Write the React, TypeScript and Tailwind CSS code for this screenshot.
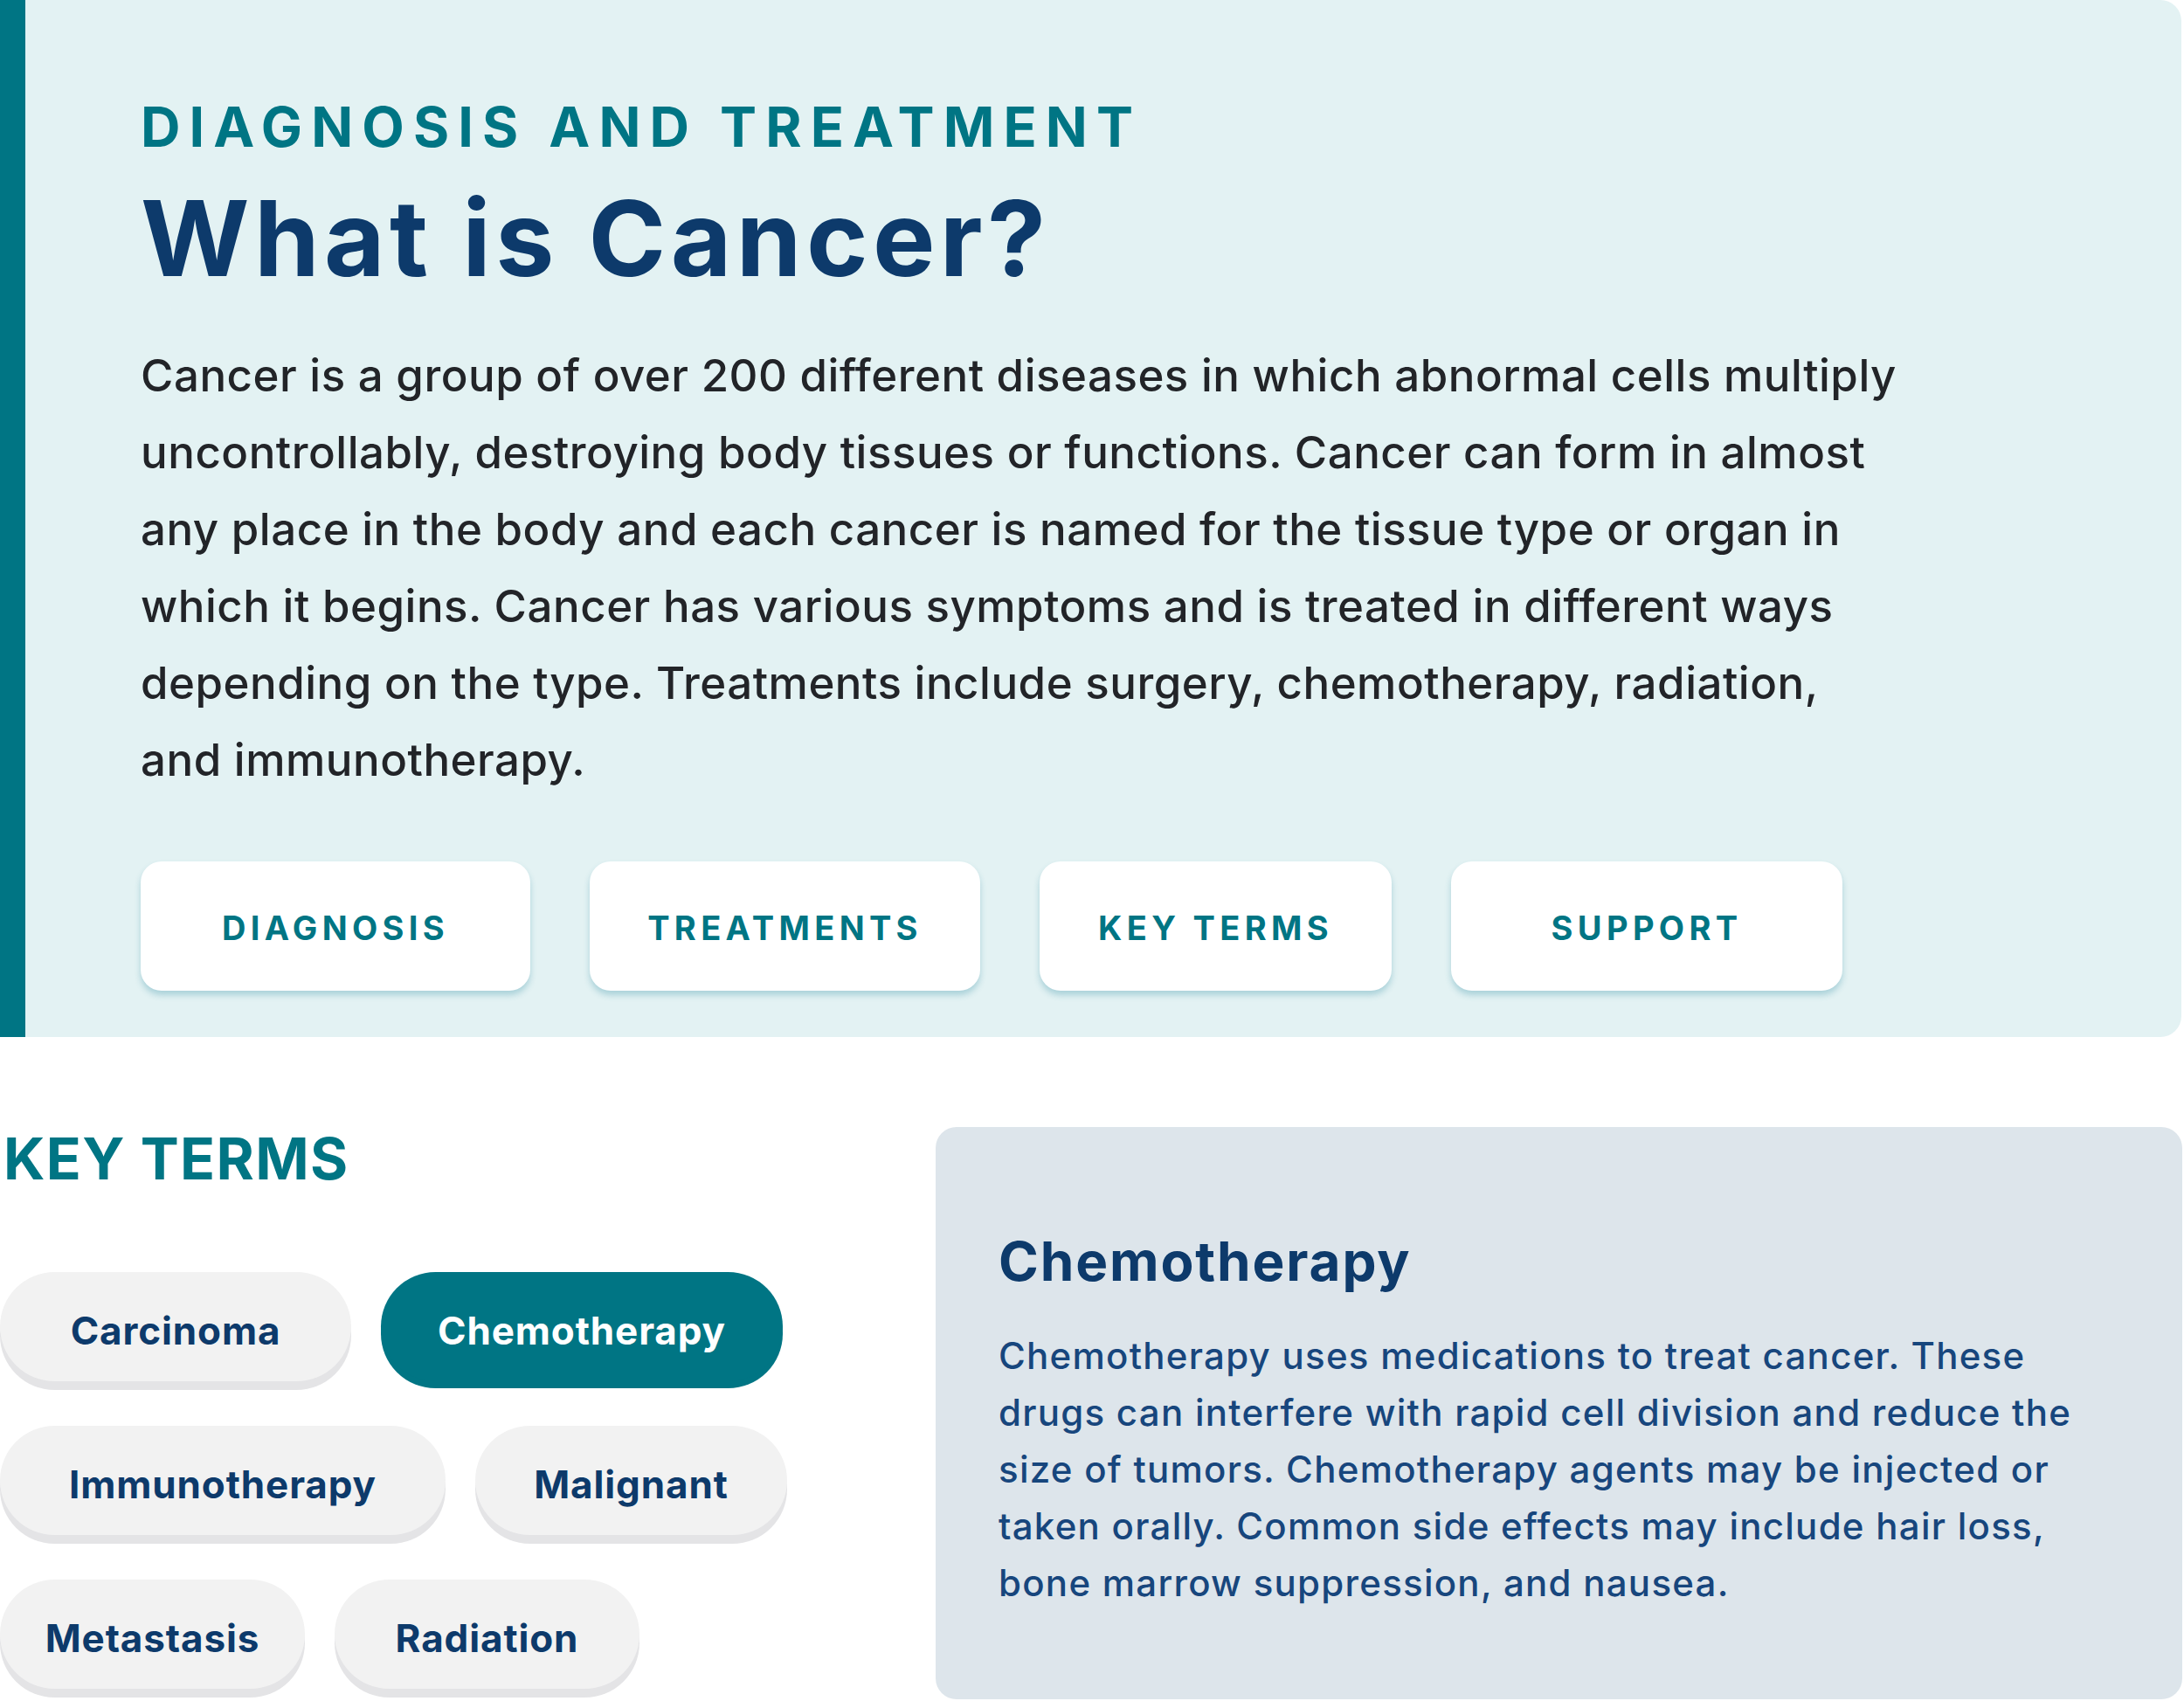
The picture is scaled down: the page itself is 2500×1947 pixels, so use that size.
const sections = [
  { label: "DIAGNOSIS", w: "w-[446px]" },
  { label: "TREATMENTS", w: "w-[447px]" },
  { label: "KEY TERMS", w: "w-[403px]" },
  { label: "SUPPORT", w: "w-[448px]" },
];

const terms = [
  { label: "Carcinoma", w: "w-[402px]" },
  { label: "Chemotherapy", w: "w-[460px]", active: true },
  { label: "Immunotherapy", w: "w-[510px]" },
  { label: "Malignant", w: "w-[357px]" },
  { label: "Metastasis", w: "w-[349px]" },
  { label: "Radiation", w: "w-[349px]" },
];

function TermChip({ label, w, active }: { label: string; w: string; active?: boolean }) {
  return (
    <button
      className={
        active
          ? `${w} h-[125px] pt-[8px] rounded-full bg-[#007584] text-white text-[44px] font-bold leading-none tracking-[0.02em] shadow-[0_8px_0_#007584]`
          : `${w} h-[125px] pt-[8px] rounded-full bg-[#f2f2f2] text-[#0d3a6b] text-[44px] font-bold leading-none tracking-[0.02em] shadow-[0_10px_0_#e4e4e6]`
      }
    >
      {label}
    </button>
  );
}

export default function App() {
  return (
    <div className="w-[2500px] h-[1947px] bg-white font-['Inter',sans-serif] overflow-hidden">
      {/* intro panel */}
      <section className="mr-[3px] h-[1187px] flex border-l-[29px] border-[#007584] bg-[#e3f2f3] rounded-r-[24px]">
        <div className="pl-[132px] pt-[114px] flex flex-col">
          <p className="text-[63px] leading-none font-bold tracking-[0.16em] text-[#007584]">
            DIAGNOSIS AND TREATMENT
          </p>
          <h1 className="mt-[36px] text-[120px] leading-none font-bold tracking-[0.045em] text-[#0d3a6b]">
            What is Cancer?
          </h1>
          <p className="mt-[53px] max-w-[2015px] text-[51px] leading-[88px] font-medium tracking-[0.01em] text-[#222428]">
            Cancer is a group of over 200 different diseases in which abnormal cells multiply
            uncontrollably, destroying body tissues or functions. Cancer can form in almost any
            place in the body and each cancer is named for the tissue type or organ in which it
            begins. Cancer has various symptoms and is treated in different ways depending on the
            type. Treatments include surgery, chemotherapy, radiation, and immunotherapy.
          </p>
          <div className="mt-[72px] flex gap-[68px]">
            {sections.map((s) => (
              <button
                key={s.label}
                className={`${s.w} h-[148px] pt-[4px] rounded-[24px] bg-white text-[38px] leading-none font-bold tracking-[0.14em] text-[#007584] shadow-[0_5px_7px_rgba(40,135,160,0.3)]`}
              >
                {s.label}
              </button>
            ))}
          </div>
        </div>
      </section>

      {/* key terms */}
      <section className="mt-[103px] flex">
        <div className="w-[1071px] pt-[3px]">
          <h2 className="pl-[4px] text-[66px] leading-none font-bold tracking-[0.02em] text-[#007584]">
            KEY TERMS
          </h2>
          <div className="mt-[97px] flex flex-wrap gap-x-[34px] gap-y-[51px] w-[960px]">
            {terms.map((t) => (
              <TermChip key={t.label} {...t} />
            ))}
          </div>
        </div>
        <div className="mr-[2px] flex-1 h-[655px] rounded-[24px] bg-[#dde5eb] pl-[72px] pt-[123px]">
          <h3 className="text-[62px] leading-none font-bold tracking-[0.03em] text-[#0d3a6b]">
            Chemotherapy
          </h3>
          <p className="mt-[44px] max-w-[1260px] text-[42px] leading-[65px] font-medium tracking-[0.03em] text-[#17467d]">
            Chemotherapy uses medications to treat cancer. These drugs can interfere with rapid
            cell division and reduce the size of tumors. Chemotherapy agents may be injected or
            taken orally. Common side effects may include hair loss, bone marrow suppression, and
            nausea.
          </p>
        </div>
      </section>
    </div>
  );
}
